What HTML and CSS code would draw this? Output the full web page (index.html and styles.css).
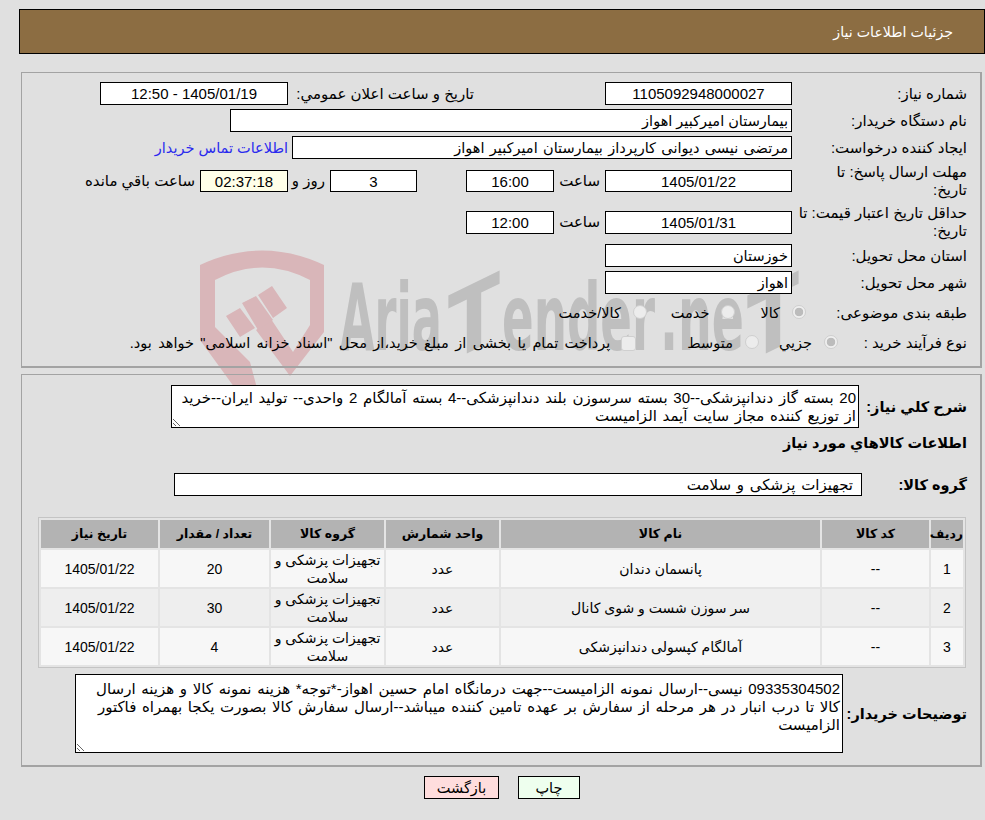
FILE: index.html
```html
<!DOCTYPE html>
<html lang="fa" dir="rtl">
<head>
<meta charset="utf-8">
<title>جزئیات اطلاعات نیاز</title>
<link rel="stylesheet" href="styles.css">
</head>
<body>
<svg class="watermark" width="985" height="420" viewBox="0 0 985 420" aria-hidden="true">
  <path class="wm-red" d="M200 340 L200 265 Q262 236 324 265 L324 332 L290 376 L256 330 L271 319 L293 352 L310 325 L310 280 Q262 255 215 280 L215 327 L250 362 L258 392 L245 402 Z"/>
  <path class="wm-red" d="M226 316 L240 308 L255 328 L240 337 Z M242 303 L256 296 L273 320 L258 330 Z M258 295 L272 286 L287 308 L273 318 Z"/>
  <g class="wm-text" direction="ltr">
    <text x="340" y="350" textLength="102" lengthAdjust="spacingAndGlyphs">Aria</text>
    <text x="448" y="350" textLength="52" lengthAdjust="spacingAndGlyphs" transform="translate(474 0) skewY(-26) translate(-474 0)">T</text>
    <text x="502" y="350" textLength="153" lengthAdjust="spacingAndGlyphs">ender</text>
    <text x="660" y="350" textLength="84" lengthAdjust="spacingAndGlyphs">.ne</text>
    <text x="747" y="350" textLength="52" lengthAdjust="spacingAndGlyphs" transform="translate(773 0) skewY(-26) translate(-773 0)">T</text>
  </g>
</svg>
<div class="page">
  <header class="title-bar">جزئیات اطلاعات نیاز</header>

  <section class="panel panel-info">
    <div class="row r1">
      <div class="label">شماره نیاز:</div>
      <div class="field w187 center">1105092948000027</div>
      <div class="inline-label w181 gap-l">تاریخ و ساعت اعلان عمومي:</div>
      <div class="field w188 center">1405/01/19 - 12:50</div>
    </div>
    <div class="row r2">
      <div class="label">نام دستگاه خریدار:</div>
      <div class="field w562">بیمارستان امیرکبیر اهواز</div>
    </div>
    <div class="row r3">
      <div class="label">ایجاد کننده درخواست:</div>
      <div class="field w500">مرتضی نیسی دیوانی کارپرداز بیمارستان امیرکبیر اهواز</div>
      <a class="contact" href="#">اطلاعات تماس خریدار</a>
    </div>
    <div class="row r4">
      <div class="label">مهلت ارسال پاسخ: تا<br>تاریخ:</div>
      <div class="field w187 center">1405/01/22</div>
      <div class="inline-label w51">ساعت</div>
      <div class="field w88 center">16:00</div>
      <div class="field w87 center day">3</div>
      <div class="inline-label w42">روز و</div>
      <div class="field w88 center remain">02:37:18</div>
      <div class="inline-label rest">ساعت باقي مانده</div>
    </div>
    <div class="row r5">
      <div class="label">حداقل تاریخ اعتبار قیمت: تا تاریخ:</div>
      <div class="field w187 center">1405/01/31</div>
      <div class="inline-label w51">ساعت</div>
      <div class="field w88 center">12:00</div>
    </div>
    <div class="row r6">
      <div class="label">استان محل تحویل:</div>
      <div class="field w187">خوزستان</div>
    </div>
    <div class="row r7">
      <div class="label">شهر محل تحویل:</div>
      <div class="field w187">اهواز</div>
    </div>
    <div class="row r8">
      <div class="label">طبقه بندی موضوعی:</div>
      <label class="opt o1"><input type="radio" name="cat" checked disabled><span>کالا</span></label>
      <label class="opt o2"><input type="radio" name="cat" disabled><span>خدمت</span></label>
      <label class="opt o3"><input type="radio" name="cat" disabled><span>کالا/خدمت</span></label>
    </div>
    <div class="row r9">
      <div class="label">نوع فرآیند خرید :</div>
      <label class="opt o4"><input type="radio" name="proc" checked disabled><span>جزيي</span></label>
      <label class="opt o5"><input type="radio" name="proc" disabled><span>متوسط</span></label>
      <label class="opt o6"><input class="check" type="checkbox" disabled><span class="pay">پرداخت تمام یا بخشی از مبلغ خرید،از محل "اسناد خزانه اسلامی" خواهد بود.</span></label>
    </div>
  </section>

  <section class="panel panel-goods">
    <div class="row desc-row">
      <div class="bold-label w108">شرح كلي نیاز:</div>
      <textarea class="area area-desc" readonly>20 بسته گاز دندانپزشکی--30 بسته سرسوزن بلند دندانپزشکی--4 بسته آمالگام 2 واحدی-- تولید ایران--خرید از توزیع کننده مجاز سایت آیمد الزامیست</textarea>
    </div>
    <h2 class="goods-title">اطلاعات كالاهاي مورد نیاز</h2>
    <div class="row group-row">
      <div class="bold-label w105">گروه کالا:</div>
      <div class="field w688 group-field">تجهیزات پزشکی و سلامت</div>
    </div>
    <table class="goods">
      <colgroup>
        <col class="c1"><col class="c2"><col class="c3"><col class="c4"><col class="c5"><col class="c6"><col class="c7">
      </colgroup>
      <thead>
        <tr><th>ردیف</th><th>کد کالا</th><th>نام کالا</th><th>واحد شمارش</th><th>گروه کالا</th><th>تعداد / مقدار</th><th>تاریخ نیاز</th></tr>
      </thead>
      <tbody>
        <tr><td>1</td><td>--</td><td>پانسمان دندان</td><td>عدد</td><td>تجهیزات پزشکی و سلامت</td><td>20</td><td>1405/01/22</td></tr>
        <tr><td>2</td><td>--</td><td>سر سوزن شست و شوی کانال</td><td>عدد</td><td>تجهیزات پزشکی و سلامت</td><td>30</td><td>1405/01/22</td></tr>
        <tr><td>3</td><td>--</td><td>آمالگام کپسولی دندانپزشکی</td><td>عدد</td><td>تجهیزات پزشکی و سلامت</td><td>4</td><td>1405/01/22</td></tr>
      </tbody>
    </table>
    <div class="row notes-row">
      <div class="bold-label w124">توضیحات خریدار:</div>
      <textarea class="area area-notes" readonly>09335304502 نیسی--ارسال نمونه الزامیست--جهت درمانگاه امام حسین اهواز-*توجه* هزینه نمونه کالا و هزینه ارسال کالا تا درب انبار در هر مرحله از سفارش بر عهده تامین کننده میباشد--ارسال سفارش کالا بصورت یکجا بهمراه فاکتور الزامیست</textarea>
    </div>
  </section>

  <div class="actions">
    <button class="btn print" type="button">چاپ</button>
    <button class="btn back" type="button">بازگشت</button>
  </div>
</div>
</body>
</html>
```
FILE: styles.css
```css
* { box-sizing: border-box; }
html, body { margin: 0; padding: 0; }
body {
  position: relative;
  width: 985px;
  height: 820px;
  overflow: hidden;
  background: #e0e0e0;
  color: #000;
  font-family: "Liberation Sans", "DejaVu Sans", sans-serif;
  font-size: 14.5px;
  line-height: 18px;
}
.watermark { position: absolute; top: 0; left: 0; pointer-events: none; }
.wm-red { fill: #d9b6b9; }
.wm-text {
  fill: #bfbfbf;
  font-family: "DejaVu Sans", sans-serif;
  font-weight: 700;
  font-size: 92px;
}
.page { position: relative; padding-top: 9px; }
.title-bar {
  height: 45px;
  width: 966px;
  background: #8c6d42;
  border: 1px solid #000;
  color: #fff;
  padding: 13px 31px 0 0;
  font-size: 14.2px;
}
.panel {
  width: 961px;
  margin-right: 3px;
  border: 1px solid #a3a3a3;
  border-width: 1px 2px 2px 1px;
  padding-right: 13px;
}
.panel-info { height: 296px; margin-top: 18px; padding-top: 9px; }
.panel-goods { height: 393px; margin-top: 6px; padding-top: 10px; }
.row { display: flex; align-items: center; }
.label { width: 175px; flex: none; font-size: 15px; }
.field {
  height: 23px;
  flex: none;
  background: #fff;
  border: 1px solid #000;
  padding: 2px 3px 0;
  white-space: nowrap;
  overflow: hidden;
}
.center { text-align: center; font-size: 15px; }
.w187 { width: 187px; }
.w188 { width: 188px; }
.w562 { width: 562px; }
.w500 { width: 500px; word-spacing: 1.3px; }
.w88 { width: 88px; }
.w87 { width: 87px; margin-right: 49px; }
.w51 { width: 51px; padding-right: 5px; }
.w42 { width: 42px; padding-right: 5px; }
.w181 { width: 181px; }
.gap-l { margin: 0 131px 0 5px; }
.inline-label { flex: none; white-space: nowrap; font-size: 15px; }
.rest { padding-right: 5px; }
.remain { background: #ffffe8; }
.contact { color: #2a2aee; text-decoration: none; margin-right: 4px; white-space: nowrap; font-size: 14.5px; }
.r2, .r3 { margin-top: 4px; }
.r4 { margin-top: 4px; height: 36px; }
.r4 .field { height: 22px; }
.r5 { margin-top: 5px; height: 36px; }
.r6 { margin-top: 4px; }
.r7 { margin-top: 4px; }
.r8 { margin-top: 8px; height: 22px; }
.r9 { margin-top: 8px; height: 22px; }
.opt { display: flex; align-items: center; flex: none; white-space: nowrap; }
.opt input {
  appearance: none;
  margin: 0 0 3px 0;
  width: 14px;
  height: 14px;
  flex: none;
  border: 1px solid #cfcfcf;
  border-radius: 50%;
  background: #ececec;
}
.opt input:checked { background: radial-gradient(circle, #bcbcbc 0 4px, #efefef 4.6px); }
.opt input.check { width: 15px; height: 15px; border-radius: 3px; background: #ececec; margin-bottom: 0; }
.opt span { margin-right: 12px; }
.opt .pay { word-spacing: 2.4px; margin-right: 11px; }
.o1 { margin-right: -14px; }
.o2 { margin-right: 25px; }
.o3 { margin-right: 24px; }
.o4 { margin-right: -46px; }
.o5 { margin-right: 20px; }
.o6 { margin-right: 51px; }
.bold-label { font-weight: 700; font-size: 14.5px; flex: none; }
.w108 { width: 108px; }
.w105 { width: 105px; }
.w124 { width: 124px; }
.area {
  flex: none;
  display: block;
  margin: 0;
  border: 1px solid #000;
  background: #fff;
  color: #000;
  font: inherit;
  font-size: 15px;
  word-spacing: 1.5px;
  padding: 3px 2px 1px;
  overflow: hidden;
  outline: none;
  border-radius: 0;
}
.area-desc { width: 688px; height: 43px; }
.area-notes { width: 768px; height: 79px; padding-top: 5px; }
.goods-title { font-size: 14.5px; line-height: 18px; font-weight: 700; margin: 6px 0 0; }
.group-row { margin-top: 21px; }
.group-field { padding-right: 8px; font-size: 15px; word-spacing: 1.5px; }
.w688 { width: 688px; }
.goods {
  width: 928px;
  margin-top: 21px;
  margin-right: 1px;
  table-layout: fixed;
  border: 1px solid #c4c4c4;
  border-collapse: separate;
  border-spacing: 2px;
  background: #e4e4e4;
  font-size: 14px;
  line-height: 18px;
}
.c1 { width: 32px; }
.c2 { width: 107px; }
.c3 { width: 319px; }
.c4 { width: 113px; }
.c5 { width: 113px; }
.c6 { width: 109px; }
.c7 { width: 117px; }
.goods th { background: #b3b3b3; height: 28px; padding: 0; font-size: 12.5px; font-weight: 700; }
.goods td { background: #f7f7f7; height: 37px; padding: 0 2px; text-align: center; }
.goods tbody tr:nth-child(2) td { background: #eee; }
.notes-row { margin-top: 6px; }
.actions { display: flex; gap: 19px; margin-top: 9px; padding-right: 405px; }
.btn {
  height: 23px;
  border: 1px solid #000;
  border-radius: 0;
  font: inherit;
  color: #000;
  padding: 0;
}
.print { width: 62px; background: #eeffee; }
.back { width: 75px; background: #ffdddd; }
```
